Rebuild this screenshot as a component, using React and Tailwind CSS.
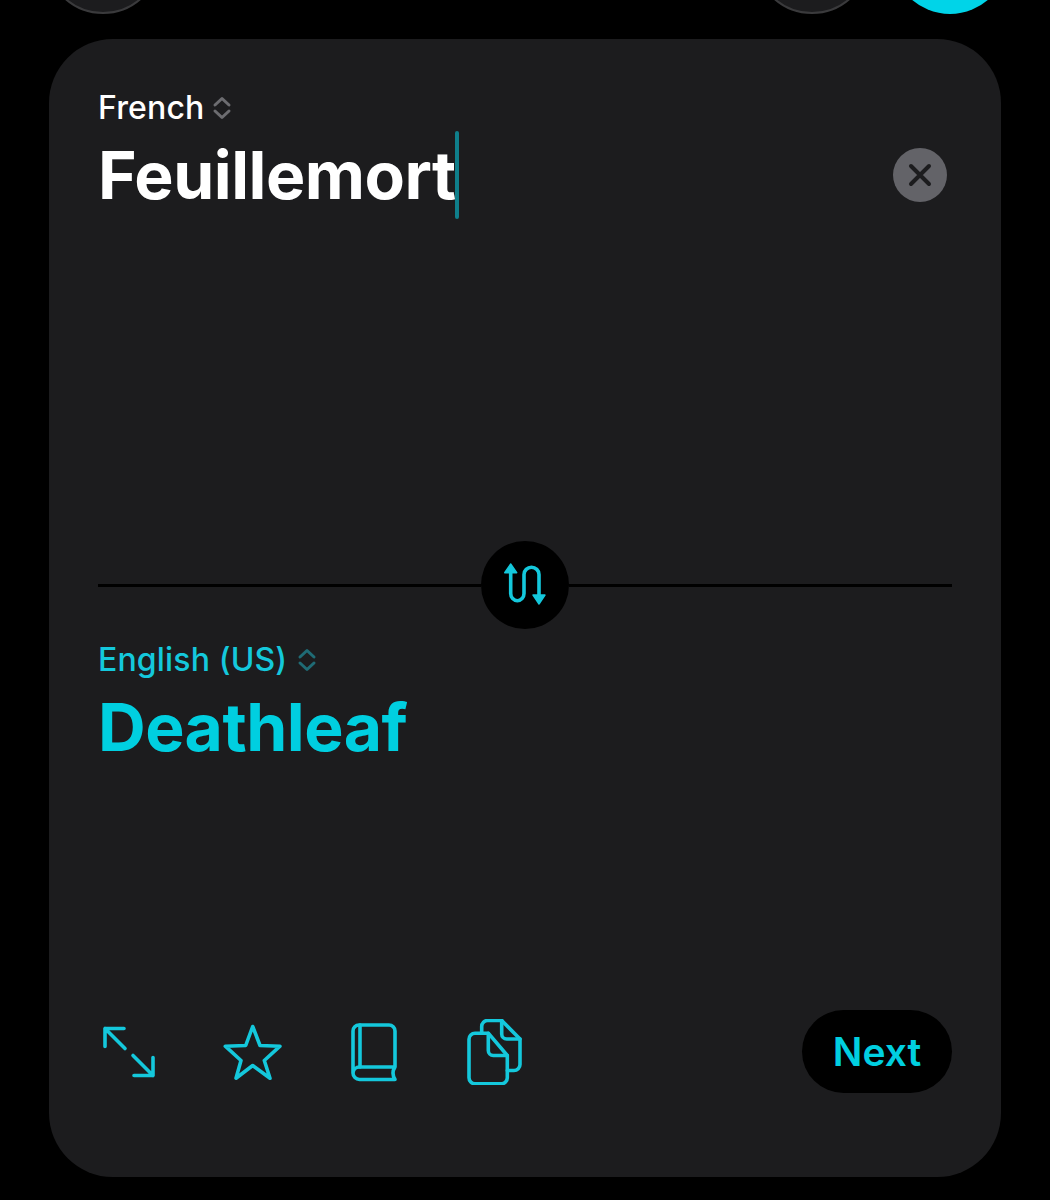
import React from "react";

const FONT = "font-['Inter','Noto_Sans',sans-serif]";

/** Small up/down chevrons next to a language name. */
function UpDown({ className }) {
  return (
    <svg width="20" height="26" viewBox="0 0 20 26" fill="none" stroke="currentColor" strokeWidth="3" strokeLinecap="round" strokeLinejoin="round" className={className}>
      <path d="M3 10 10 3.5l7 6.5" />
      <path d="M3 16 10 22.5l7-6.5" />
    </svg>
  );
}

function IconSvg({ children }) {
  return (
    <svg width="66" height="66" viewBox="0 0 66 66" fill="none" stroke="currentColor" strokeWidth="3.6" strokeLinecap="round" strokeLinejoin="round" className="shrink-0">
      {children}
    </svg>
  );
}

function ExpandIcon() {
  return (
    <IconSvg>
      <path d="M9 9.5H28M9 9.5V27.5M9 9.5 29 29.5" />
      <path d="M37 36.5 57 56.5M38 56.5H57V38.5" />
    </IconSvg>
  );
}

function StarIcon() {
  return (
    <IconSvg>
      <path d="M34.7 7.5 42 26.5 62 27.2 46.3 41.5 52 59.2 34.7 46.5 18 59.2 23 41.5 7.3 27.2 27.7 26.5Z" />
    </IconSvg>
  );
}

function BookIcon() {
  return (
    <IconSvg>
      <path d="M55 48V12a6 6 0 0 0-6-6H19a6 6 0 0 0-6 6V54a6.5 6.5 0 0 0 6.5 6.5H55Q51 54 55 48H19.5A6.5 6.5 0 0 0 13 54" />
      <path d="M20 6V48" />
    </IconSvg>
  );
}

function DocsIcon() {
  return (
    <IconSvg>
      <path d="M19.7 14V7.5a6 6 0 0 1 6-6H39.7L58 20V45.5a6 6 0 0 1-6 6H45.3" />
      <path d="M39.7 1.5V15a5 5 0 0 0 5 5H58" />
      <path d="M26.3 14.2H13a6 6 0 0 0-6 6V58.8a6 6 0 0 0 6 6H39.3a6 6 0 0 0 6-6V36.5Z" />
      <path d="M26.3 14.2V31.5a5 5 0 0 0 5 5H45.3" />
    </IconSvg>
  );
}

function SwapButton() {
  return (
    <button type="button" className="flex h-[88px] w-[88px] shrink-0 items-center justify-center rounded-full bg-black text-[#14c8dc]">
      <svg width="88" height="88" viewBox="0 0 88 88" fill="none" stroke="currentColor" strokeWidth="3.6" strokeLinecap="round">
        <path d="M29.7 30V52.5a6.65 7.2 0 0 0 13.3 0V33.5a7.5 7.2 0 0 1 15 0V55" />
        <path d="M29.7 23 35.7 31.7H23.7Z" fill="currentColor" strokeLinejoin="round" strokeWidth="1.4" />
        <path d="M58 63 64 54H52Z" fill="currentColor" strokeLinejoin="round" strokeWidth="1.4" />
      </svg>
    </button>
  );
}

export default function App() {
  return (
    <div className={`h-[1200px] w-full overflow-hidden bg-black ${FONT}`}>
      {/* Buttons above the card, cut off by the top of the page */}
      <div className="flex h-[14px] items-end justify-between pl-[45px] pr-[42px]">
        <div className="h-[116px] w-[116px] shrink-0 rounded-full border-2 border-[#3a3a3c] bg-[#1c1c1e]" />
        <div className="flex items-end gap-[22px]">
          <div className="h-[116px] w-[116px] shrink-0 rounded-full border-2 border-[#3a3a3c] bg-[#1c1c1e]" />
          <div className="h-[116px] w-[116px] shrink-0 rounded-full bg-[#00d4e8]" />
        </div>
      </div>

      <div className="mx-[49px] mt-[25px] flex h-[1138px] flex-col rounded-[64px] bg-[#1c1c1e] px-[49px] pb-[84px] pt-[51px]">
        <div className="flex h-[36px] items-center gap-[8px] text-white">
          <span className="text-[32px] font-medium leading-none tracking-[0.15px]">French</span>
          <UpDown className="text-[#6c6c70]" />
        </div>
        <div className="mt-[5px] flex h-[88px] items-center">
          <span className="text-[66px] font-bold leading-none tracking-[-0.5px] text-white">Feuillemort</span>
          <span className="ml-[-1px] h-[88px] w-[4px] rounded-full bg-[#0f7f8b]" />
          <button type="button" className="ml-auto mr-[5px] flex h-[54px] w-[54px] items-center justify-center rounded-full bg-[#636368] text-[#1c1c1e]">
            <svg width="28" height="28" viewBox="0 0 28 28" fill="none" stroke="currentColor" strokeWidth="4" strokeLinecap="round">
              <path d="M5 5 23 23M23 5 5 23" />
            </svg>
          </button>
        </div>

        <div className="h-[322px]" />

        <div className="flex items-center">
          <div className="h-[3px] flex-1 bg-black" />
          <SwapButton />
          <div className="h-[3px] flex-1 bg-black" />
        </div>

        <div className="mt-[13px] flex h-[36px] items-center gap-[10px] text-[#14c8dc]">
          <span className="text-[32px] font-medium leading-none tracking-[0.15px]">English (US)</span>
          <UpDown className="text-[#1f6b75]" />
        </div>
        <div className="mt-[5px] text-[66px] font-bold leading-[88px] tracking-[-0.5px] text-[#00cfe0]">Deathleaf</div>

        <div className="flex-1" />

        <div className="flex h-[83px] items-center">
          <div className="ml-[-2px] flex items-center gap-[56px] text-[#14c8dc]">
            <ExpandIcon />
            <StarIcon />
            <BookIcon />
            <DocsIcon />
          </div>
          <button type="button" className="ml-auto flex h-[83px] w-[150px] items-center justify-center rounded-full bg-black pt-[2px] text-[39px] font-semibold text-[#00cfe0]">
            Next
          </button>
        </div>
      </div>
    </div>
  );
}
